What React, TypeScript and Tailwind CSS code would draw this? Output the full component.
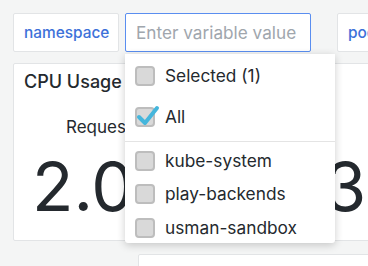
import React from "react";

function Box({ checked }: { checked?: boolean }) {
  return (
    <span className="relative flex h-[20px] w-[20px] shrink-0 rounded-[4px] border-2 border-[#bdbdbd] bg-[#d9d9d9]">
      {checked && (
        <svg className="absolute -left-[2px] -top-[5px]" width="26" height="24" viewBox="0 0 26 24">
          <path d="M4 13 L10 19 L22 4" fill="none" stroke="#45b6dc" strokeWidth="4" strokeLinecap="round" strokeLinejoin="round" />
        </svg>
      )}
    </span>
  );
}

function Row({ label, checked, className }: { label: string; checked?: boolean; className?: string }) {
  return (
    <div className={`flex h-[24px] items-center gap-[10px] pl-[10px] ${className ?? ""}`}>
      <Box checked={checked} />
      <span className="text-[17.3px] leading-none text-[#24292e]">{label}</span>
    </div>
  );
}

export default function App() {
  return (
    <div
      className="relative h-[266px] w-[368px] overflow-hidden bg-[#f4f5f5]"
      style={{ fontFamily: "Inter, 'Noto Sans', sans-serif" }}
    >
      <div className="flex items-start pl-[13px] pt-[13px]">
        <div className="flex h-[39px] w-[106px] shrink-0 items-center rounded-[2px] border border-[#e2e4e6] bg-white pl-[10px] text-[15.4px] font-medium text-[#3d71d9]">
          namespace
        </div>
        <div className="ml-[6px] flex h-[39px] w-[186px] shrink-0 items-center rounded-[2px] border border-[#5a8ef0] bg-white pl-[10px] text-[17.2px] text-[#a0a6ad]">
          Enter variable value
        </div>
        <div className="ml-[26px] flex h-[39px] w-[80px] shrink-0 items-center rounded-[2px] border border-[#e2e4e6] bg-white pl-[10px] text-[15.4px] font-medium text-[#3d71d9]">
          pod
        </div>
      </div>

      <div className="ml-[13px] mt-[11px] h-[178px] w-[380px] rounded-[2px] border border-[#e2e4e6] bg-white">
        <div className="pl-[10px] pt-[4px] text-[18px] font-medium text-[#24292e]">CPU Usage</div>
        <div className="pl-[52px] pt-[20px] text-[17px] text-[#24292e]">Requests</div>
        <div className="mt-[5px] whitespace-nowrap pl-[18px] text-[68px] leading-[80px] text-[#24292e]">2.03 / 16.3</div>
      </div>

      <div className="ml-[138px] mt-[13px] h-[40px] w-[260px] rounded-[2px] border border-[#e2e4e6] bg-white" />

      <div className="absolute left-[125px] top-[54px] h-[189px] w-[210px] rounded-b-[3px] bg-white shadow-[0_2px_8px_rgba(0,0,0,0.2)]">
        <div className="pt-[10px]">
          <Row label="Selected (1)" />
          <Row label="All" checked className="mt-[17px]" />
          <div className="mt-[12px] h-px bg-[#e4e4e4]" />
          <Row label="kube-system" className="mt-[7px]" />
          <Row label="play-backends" className="mt-[9px]" />
          <Row label="usman-sandbox" className="mt-[10px]" />
        </div>
      </div>
    </div>
  );
}
